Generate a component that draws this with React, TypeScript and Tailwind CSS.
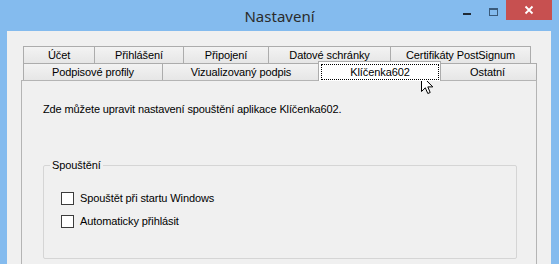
const rowOne = [
  { label: "Účet", w: "w-[72px]" },
  { label: "Přihlášení", w: "w-[89px]" },
  { label: "Připojení", w: "w-[85px]" },
  { label: "Datové schránky", w: "w-[122px]" },
  { label: "Certifikáty PostSignum", w: "w-[140px]" },
];

const Tab = ({ label, w, first }: { label: string; w: string; first?: boolean }) => (
  <div
    className={`${w} h-[17px] flex items-center justify-center border-t border-r border-[#acacac] bg-gradient-to-b from-[#f3f3f3] to-[#e6e6e6] text-[11px] leading-[13px] tracking-[-0.1px] text-black ${first ? "border-l" : ""}`}
  >
    {label}
  </div>
);

const CheckRow = ({ label }: { label: string }) => (
  <div className="flex items-center h-[13px]">
    <div className="w-[13px] h-[13px] border border-[#3c3c3c] bg-white" />
    <span className="ml-[6px] text-[11px] leading-[13px] tracking-[-0.1px] text-black">{label}</span>
  </div>
);

export default function App() {
  return (
    <div className="relative w-[559px] h-[264px] overflow-hidden bg-[#84bbee] flex flex-col font-['Liberation_Sans',Arial,sans-serif]">
      {/* title bar */}
      <div className="h-[31px] grid grid-cols-[1fr_auto_1fr] shrink-0">
        <div />
        <div className="flex items-center pt-[1px] font-['Segoe_UI','Noto_Sans',sans-serif] text-[15px] text-[#2b2b2b]">
          Nastavení
        </div>
        <div className="flex justify-end items-start pr-[7px]">
          <div className="w-[27px] h-[20px] flex justify-center">
            <div className="mt-[13px] w-[8px] h-[2px] bg-[#1f2a36]" />
          </div>
          <div className="w-[26px] h-[20px] flex justify-center">
            <div className="mt-[8px] w-[9px] h-[8px] border border-t-2 border-[#3a5a7a]" />
          </div>
          <div className="w-[46px] h-[20px] bg-[#c75050] flex items-center justify-center">
            <svg width="10" height="10" viewBox="0 0 10 10">
              <path d="M1.5 1.5 L8.5 8.5 M8.5 1.5 L1.5 8.5" stroke="white" strokeWidth="1.8" />
            </svg>
          </div>
        </div>
      </div>

      {/* client area */}
      <div className="flex-1 ml-[7px] mr-[8px] bg-[#f0f0f0] pl-[14px] pt-[15px]">
        <div className="w-[516px] flex flex-col">
          <div className="flex ml-[2px]">
            {rowOne.map((t, i) => (
              <Tab key={t.label} label={t.label} w={t.w} first={i === 0} />
            ))}
          </div>
          <div className="flex ml-[2px] h-[17px] items-start">
            <Tab label="Podpisové profily" w="w-[140px]" first />
            <Tab label="Vizualizovaný podpis" w="w-[157px]" />
            <div className="relative z-10 w-[123px] h-[20px] -mx-[2px] -mt-[2px] bg-white border-t border-l border-r border-[#acacac] flex">
              <div className="flex-1 ml-[2px] mr-[1px] mt-[2px] mb-[1px] border border-dotted border-black flex items-center justify-center text-[11px] leading-[13px] tracking-[-0.1px] text-black">
                Klíčenka602
              </div>
            </div>
            <Tab label="Ostatní" w="w-[98px]" />
          </div>

          {/* tab page */}
          <div className="h-[200px] border border-[#b4b4b4] bg-[#f0f0f0] pl-[21px] pt-[22px]">
            <p className="text-[11px] leading-[13px] tracking-[-0.12px] text-black">
              Zde můžete upravit nastavení spouštění aplikace Klíčenka602.
            </p>
            <fieldset className="mt-[43px] w-[474px] h-[100px] border border-[#d5d5d5] rounded-[2px] p-0">
              <legend className="ml-[6px] px-[2px] text-[11px] leading-[13px] tracking-[-0.1px] text-black">Spouštění</legend>
              <div className="flex flex-col gap-[10px] pl-[17px] pt-[20px]">
                <CheckRow label="Spouštět při startu Windows" />
                <CheckRow label="Automaticky přihlásit" />
              </div>
            </fieldset>
          </div>
        </div>
      </div>

      {/* mouse pointer */}
      <svg className="absolute left-[420px] top-[74px]" width="14" height="21" viewBox="0 0 14 21">
        <path
          d="M1.5 1.5 L1.5 17.5 L5.3 13.8 L7.8 19.5 L10.2 18.5 L7.8 12.9 L12.8 12.9 Z"
          fill="white"
          stroke="black"
          strokeWidth="1"
          strokeLinejoin="miter"
        />
      </svg>
    </div>
  );
}
